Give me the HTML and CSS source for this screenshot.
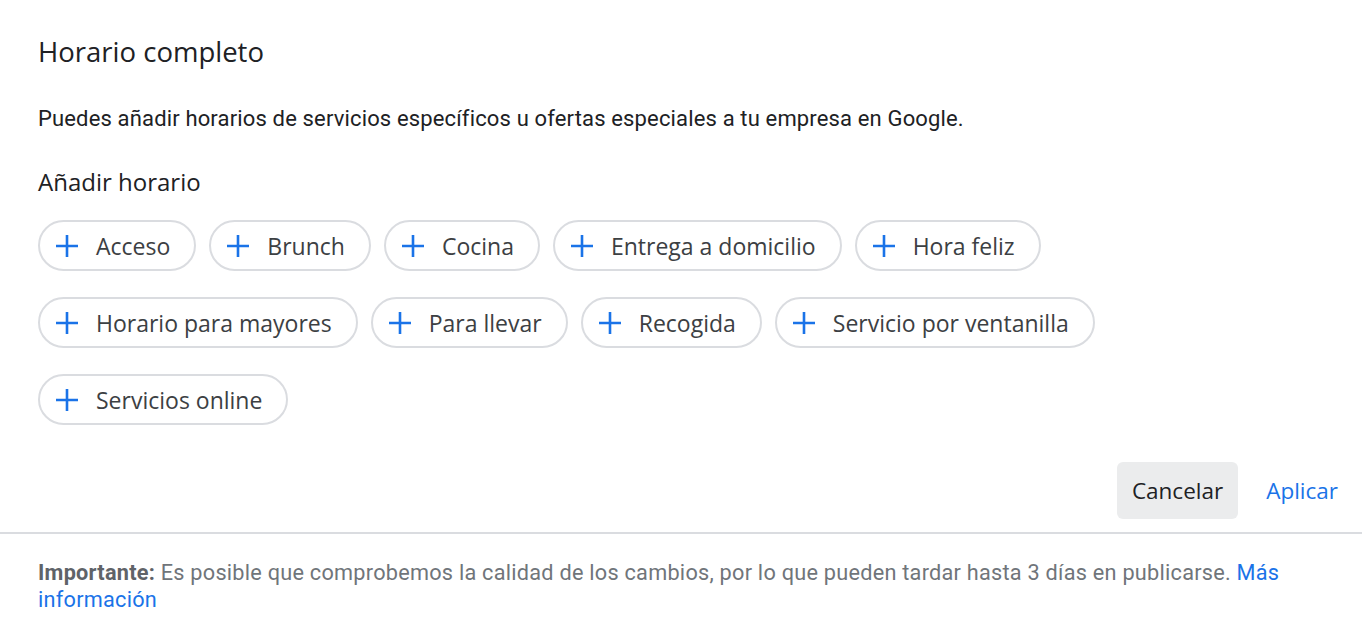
FILE: index.html
```html
<!DOCTYPE html>
<html lang="es">
<head>
    <meta charset="UTF-8">
    <meta name="viewport" content="width=device-width, initial-scale=1.0">
    <title>Horario completo</title>
    <link rel="stylesheet" href="styles.css">
</head>
<body>

    <div class="dialog">
        <div class="content">
            <h2 class="title">Horario completo</h2>
            <p class="intro">Puedes añadir horarios de servicios específicos u ofertas especiales a tu empresa en Google.</p>
            <h3 class="subtitle">Añadir horario</h3>
            <div class="chips">
                <button class="chip"><svg viewBox="0 0 22 22"><path d="M11 0v22M0 11h22"/></svg>Acceso</button>
                <button class="chip"><svg viewBox="0 0 22 22"><path d="M11 0v22M0 11h22"/></svg>Brunch</button>
                <button class="chip"><svg viewBox="0 0 22 22"><path d="M11 0v22M0 11h22"/></svg>Cocina</button>
                <button class="chip"><svg viewBox="0 0 22 22"><path d="M11 0v22M0 11h22"/></svg>Entrega a domicilio</button>
                <button class="chip"><svg viewBox="0 0 22 22"><path d="M11 0v22M0 11h22"/></svg>Hora feliz</button>
                <button class="chip"><svg viewBox="0 0 22 22"><path d="M11 0v22M0 11h22"/></svg>Horario para mayores</button>
                <button class="chip"><svg viewBox="0 0 22 22"><path d="M11 0v22M0 11h22"/></svg>Para llevar</button>
                <button class="chip"><svg viewBox="0 0 22 22"><path d="M11 0v22M0 11h22"/></svg>Recogida</button>
                <button class="chip"><svg viewBox="0 0 22 22"><path d="M11 0v22M0 11h22"/></svg>Servicio por ventanilla</button>
                <button class="chip"><svg viewBox="0 0 22 22"><path d="M11 0v22M0 11h22"/></svg>Servicios online</button>
            </div>
        </div>

        <div class="actions">
            <button class="btn btn-cancel">Cancelar</button>
            <button class="btn btn-apply">Aplicar</button>
        </div>

        <div class="footer">
            <b>Importante:</b> Es posible que comprobemos la calidad de los cambios, por lo que pueden tardar hasta 3 días en publicarse. <a href="#">Más</a><br><a href="#">información</a>
        </div>
    </div>

</body>
</html>
```

FILE: styles.css
```css
body {
    margin: 0;
    padding: 0;
    background: #fff;
    font-family: Roboto, Arial, sans-serif;
    color: #202124;
}
.dialog {
    width: 1362px;
    height: 636px;
    display: flex;
    flex-direction: column;
}
.content {
    padding: 0 38px;
}
.title {
    margin: 35px 0 0;
    font-family: "Open Sans", Roboto, sans-serif;
    font-size: 27.5px;
    font-weight: 400;
    line-height: 34px;
    color: #202124;
}
.intro {
    margin: 36px 0 0;
    font-size: 22px;
    letter-spacing: 0.15px;
    line-height: 28px;
    color: #202124;
}
.subtitle {
    margin: 33px 0 0;
    font-family: "Open Sans", Roboto, sans-serif;
    font-size: 24px;
    font-weight: 400;
    line-height: 32px;
    color: #202124;
}
.chips {
    display: flex;
    flex-wrap: wrap;
    gap: 26px 13px;
    margin-top: 22px;
    width: 1110px;
}
.chip {
    display: flex;
    align-items: center;
    height: 51px;
    padding: 0 24px 0 16px;
    border: 2px solid #dadce0;
    border-radius: 26px;
    background: #fff;
    font-family: "Open Sans", Roboto, sans-serif;
    font-size: 23px;
    font-weight: 500;
    color: #3c4043;
    cursor: pointer;
}
.chip svg {
    width: 22px;
    height: 22px;
    margin-right: 18px;
    fill: none;
    stroke: #1a73e8;
    stroke-width: 2.6;
}
.actions {
    display: flex;
    justify-content: flex-end;
    align-items: center;
    gap: 15px;
    padding: 0 11px 0 0;
    margin-top: 36px;
    height: 58px;
}
.btn {
    height: 57px;
    padding: 0 13px;
    border: none;
    border-radius: 6px;
    background: none;
    font-family: "Open Sans", Roboto, sans-serif;
    font-size: 22.5px;
    font-weight: 500;
    cursor: pointer;
}
.btn-cancel {
    padding: 0 15px;
    background: #ebeced;
    color: #202124;
}
.btn-apply {
    color: #1a73e8;
}
.footer {
    margin-top: 13px;
    border-top: 2px solid #dadce0;
    padding: 25px 38px 0;
    font-size: 21.7px;
    letter-spacing: 0.25px;
    line-height: 27px;
    color: #70757a;
}
.footer b {
    color: #5f6368;
}
.footer a {
    color: #1a73e8;
    text-decoration: none;
}
```
